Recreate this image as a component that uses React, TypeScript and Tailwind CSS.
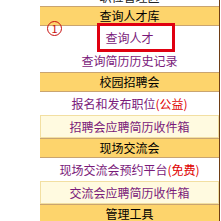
const FONT = "font-['Noto_Sans_CJK_SC','Noto_Sans',sans-serif]";

function Bar({ title }: { title: string }) {
  return (
    <div className="flex h-[20px] items-center justify-center border-y border-[#c9a470] bg-[#fdd46c] text-[12px] leading-none text-black">
      {title}
    </div>
  );
}

function LinkRow({ label, note }: { label: string; note?: string }) {
  return (
    <div className="flex h-[23px] items-center justify-center bg-white text-[12px] leading-none text-[#7a1a7a]">
      {label}
      {note && <span className="text-[#e00000]">({note})</span>}
    </div>
  );
}

function BoxRow({ label }: { label: string }) {
  return (
    <div className="flex h-[23px] items-center justify-center border border-[#f2dfa2] bg-[#fffae0] text-[12px] leading-none text-[#7a1a7a]">
      {label}
    </div>
  );
}

export default function App() {
  return (
    <div className={`relative h-[221px] w-[221px] overflow-hidden bg-white ${FONT}`}>
      <div className="ml-[40px] w-[180px] border-r border-[#6e3c14]">
        <div className="h-[6px] overflow-hidden bg-white">
          <div className="-mt-[9px] text-center text-[12px] leading-[12px] text-[#222]">职位管理区</div>
        </div>
        <Bar title="查询人才库" />
        <LinkRow label="查询人才" />
        <LinkRow label="查询简历历史记录" />
        <Bar title="校园招聘会" />
        <LinkRow label="报名和发布职位" note="公益" />
        <BoxRow label="招聘会应聘简历收件箱" />
        <Bar title="现场交流会" />
        <LinkRow label="现场交流会预约平台" note="免费" />
        <BoxRow label="交流会应聘简历收件箱" />
        <Bar title="管理工具" />
      </div>

      {/* annotation overlay */}
      <div className="absolute left-[47px] top-[21px] flex h-[15px] w-[15px] items-center justify-center rounded-full border border-[#c81010] text-[11px] leading-none text-[#c81010]">
        1
      </div>
      <div className="absolute left-[97px] top-[23px] h-[29px] w-[78px] border-[3px] border-[#e00010]" />
    </div>
  );
}
